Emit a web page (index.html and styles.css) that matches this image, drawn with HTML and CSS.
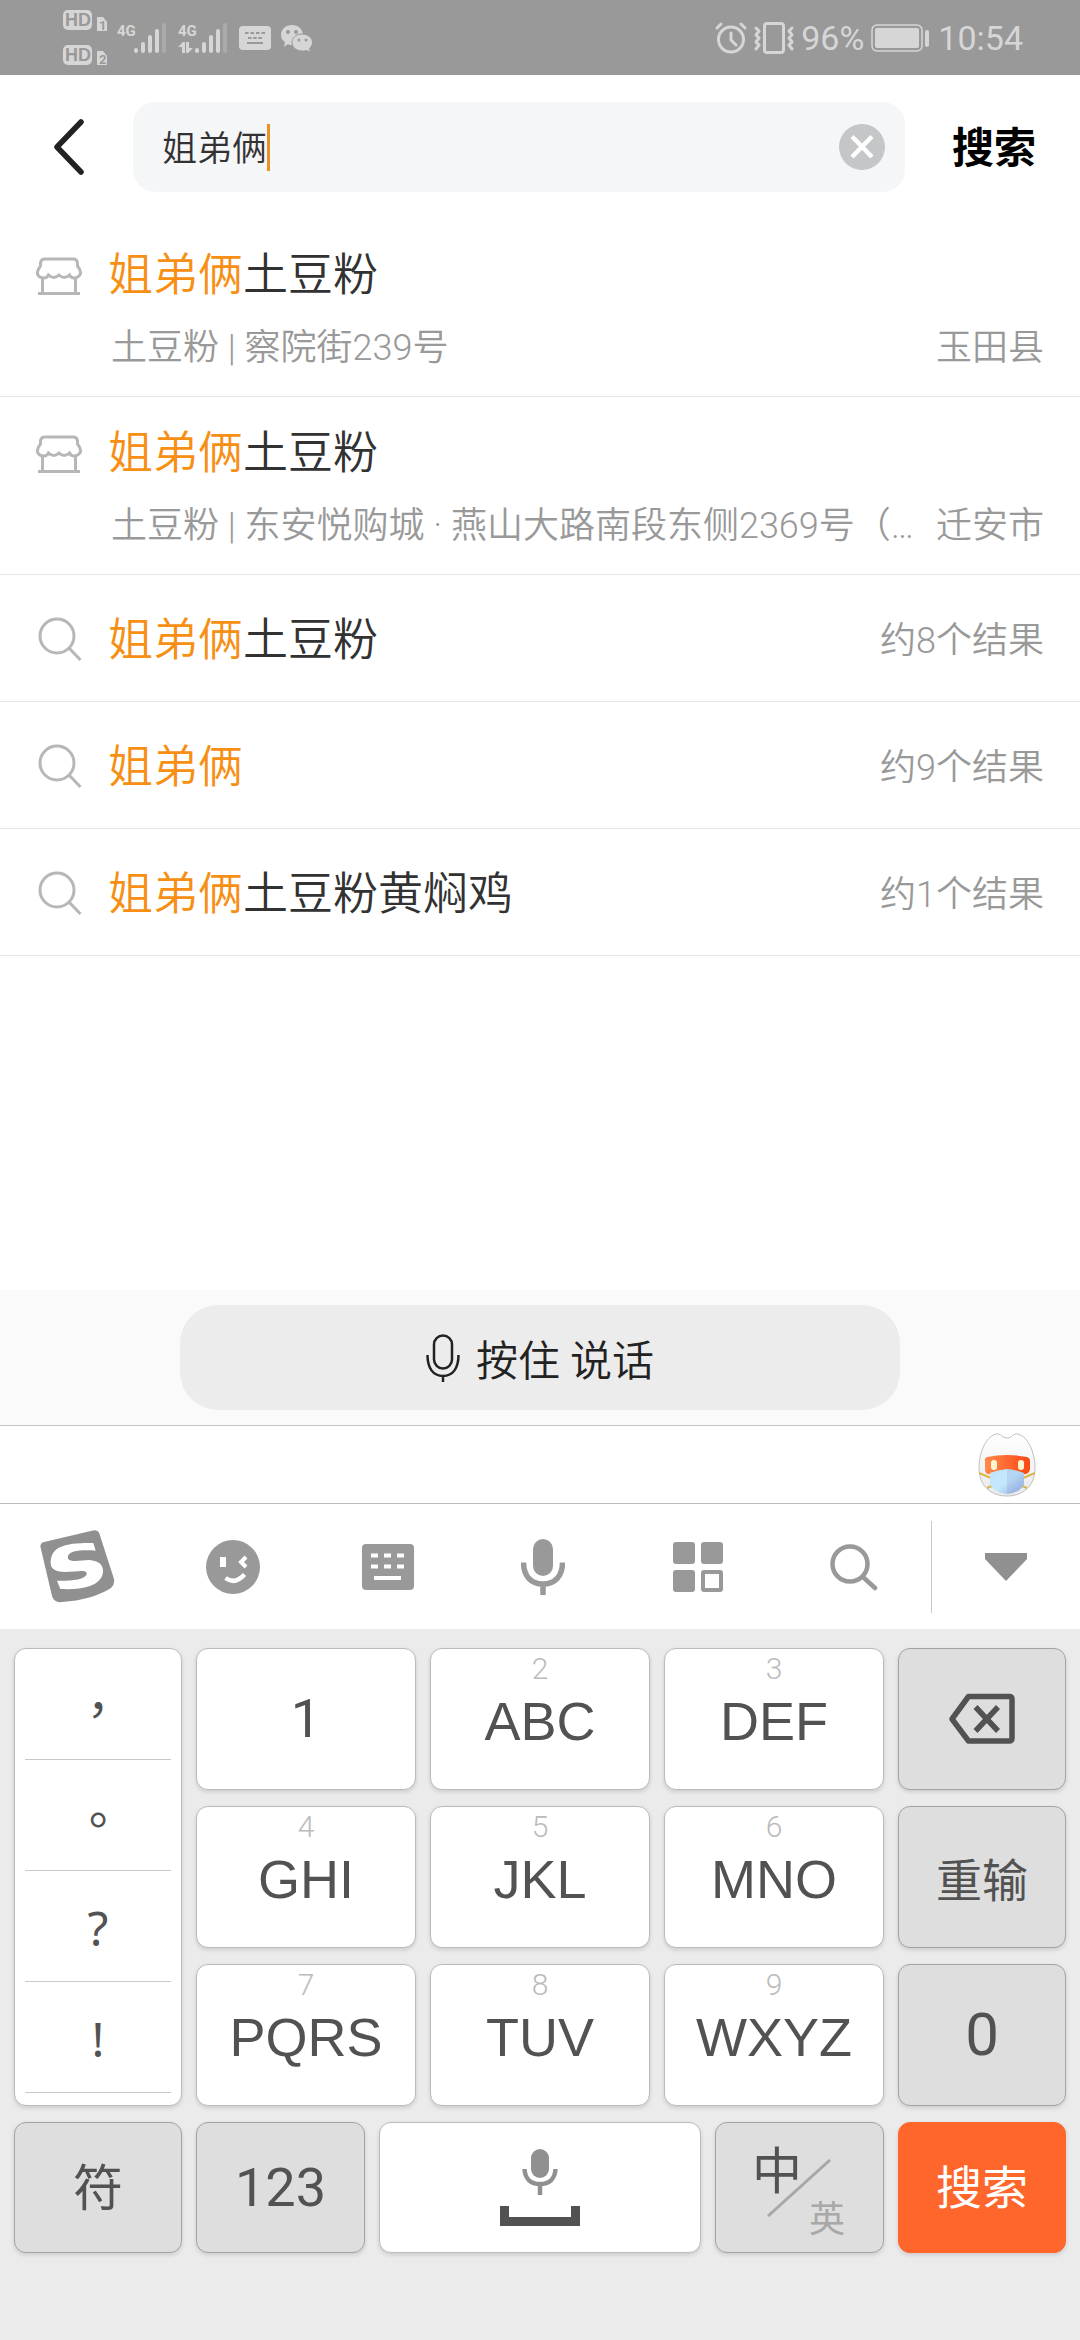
FILE: index.html
```html
<!DOCTYPE html>
<html lang="zh-CN">
<head>
<meta charset="utf-8">
<meta name="viewport" content="width=device-width">
<title>搜索</title>
<link rel="stylesheet" href="styles.css">
</head>
<body>
<svg width="0" height="0" class="defs" aria-hidden="true">
  <symbol id="store" viewBox="0 0 46 38">
    <path d="M9 2H37Q41 2 41.500 6V9Q45 13 44.500 17Q42 21 38 21Q35 21 33.500 18Q28 23 23 18Q18 23 12.500 18Q11 21 8 21Q3 21 1.500 17Q1 13 4.500 9V6Q5 2 9 2ZM6.500 21V36M39.500 21V36M2 36.500H44"/>
  </symbol>
  <symbol id="glass" viewBox="0 0 44 44">
    <circle cx="19" cy="19" r="17"/><path d="M31 31L42.500 43"/>
  </symbol>
</svg>

<header class="status">
  <div class="status-side">
    <svg width="44" height="56" viewBox="0 0 44 56">
      <g fill="#d6d6d6">
        <rect width="29" height="20" rx="5"/><rect y="35" width="29" height="20" rx="5"/>
        <path d="M34 7H40L44 12V21H34ZM34 41H40L44 46V55H34Z"/>
      </g>
      <g class="hd"><text x="2" y="16">HD</text><text x="2" y="51">HD</text></g>
      <g class="sim"><text x="36" y="20">1</text><text x="36" y="54">2</text></g>
    </svg>
    <svg width="51" height="32" viewBox="0 0 51 32">
      <text class="net" x="0" y="14">4G</text>
      <g stroke="#d6d6d6" stroke-width="4" stroke-linecap="round"><path d="M19 28V29M26 22V29M33 15V29M40 9V29"/><path d="M47 3V29" stroke="#ababab"/></g>
    </svg>
    <svg width="51" height="32" viewBox="0 0 51 32">
      <text class="net" x="0" y="14">4G</text>
      <path fill="#d6d6d6" d="M0 25L5 20H7V31H4V25ZM8 20H11V26H15L10 31H8Z"/>
      <g stroke="#d6d6d6" stroke-width="4" stroke-linecap="round"><path d="M19 28V29M26 22V29M33 15V29M40 9V29"/><path d="M47 3V29" stroke="#ababab"/></g>
    </svg>
    <svg width="32" height="32" viewBox="0 0 32 32">
      <rect y="4" width="32" height="24" rx="4" fill="#d6d6d6"/>
      <g stroke="#999" stroke-width="2"><path d="M6 11H26" stroke-dasharray="3.500 2"/><path d="M9 16H23" stroke-dasharray="3.500 1.700"/><path d="M8 21H24"/></g>
    </svg>
    <svg width="32" height="32" viewBox="0 0 32 32">
      <g fill="#d6d6d6"><path d="M11 3C17 3 22 7 22 13C22 19 17 23 11 23C9 23 8 23 7 22L3 25L4 20C1 18 0 16 0 13C0 7 5 3 11 3Z"/>
      <path stroke="#999" d="M21 12C27 12 31.500 16 31.500 20.500C31.500 23 30 25 28.500 26.500L29.500 30L25.500 28.500C24 29 23 29 21 29C15 29 11 25 11 20.500C11 16 15 12 21 12Z"/></g>
      <g fill="#999"><circle cx="7" cy="10" r="2"/><circle cx="15" cy="10" r="2"/><circle cx="18" cy="18" r="1.500"/><circle cx="25" cy="18" r="1.500"/></g>
    </svg>
  </div>
  <div class="status-side status-right">
    <svg width="32" height="32" viewBox="0 0 32 32" fill="none" stroke="#d6d6d6" stroke-width="3" stroke-linecap="round">
      <circle cx="16" cy="17.500" r="12.500"/><path d="M16 11V18L21 23M2 6L6 2M26 2L30 6" stroke-linejoin="round"/>
    </svg>
    <svg width="40" height="32" viewBox="0 0 40 32" fill="none" stroke="#d6d6d6" stroke-width="3" stroke-linecap="round" stroke-linejoin="round">
      <rect x="10.500" y="1.500" width="19" height="29" rx="2.500"/><path d="M2 6L5 9L2 13L5 16L2 20L5 23L2 27M38 6L35 9L38 13L35 16L38 20L35 23L38 27"/>
    </svg>
    <span>96%</span>
    <svg width="60" height="30" viewBox="0 0 60 30">
      <rect x="1" y="2" width="50" height="26" rx="5" fill="none" stroke="#d6d6d6" stroke-width="1.500"/><rect x="4" y="5" width="44" height="20" rx="2" fill="#d6d6d6"/><rect x="54" y="7" width="4" height="17" rx="2" fill="#d6d6d6"/>
    </svg>
    <time>10:54</time>
  </div>
</header>

<form class="search-bar">
  <button type="button" class="back" aria-label="返回">
    <svg width="32" height="56" viewBox="0 0 32 56"><path d="M28 3L4 28L28 53" fill="none" stroke="#222" stroke-width="5.500" stroke-linecap="round" stroke-linejoin="round"/></svg>
  </button>
  <div class="field">
    <input type="text" value="姐弟俩" aria-label="搜索内容">
    <span class="caret"></span>
    <button type="button" class="clear" aria-label="清除">
      <svg width="46" height="46" viewBox="0 0 46 46"><circle cx="23" cy="23" r="23" fill="#c5c6c8"/><path d="M13 12.500L33 33M33 12.500L13 33" stroke="#fff" stroke-width="4.500"/></svg>
    </button>
  </div>
  <button type="submit" class="submit">搜索</button>
</form>

<main>
  <ul class="results">
    <li><a href="#" class="shop"><svg class="icon"><use href="#store"/></svg>
      <span class="title"><mark>姐弟俩</mark>土豆粉</span>
      <span class="detail"><span class="address">土豆粉 | 察院街239号</span><span class="area">玉田县</span></span></a></li>
    <li><a href="#" class="shop"><svg class="icon"><use href="#store"/></svg>
      <span class="title"><mark>姐弟俩</mark>土豆粉</span>
      <span class="detail"><span class="address">土豆粉 | 东安悦购城 · 燕山大路南段东侧2369号（…</span><span class="area">迁安市</span></span></a></li>
    <li><a href="#" class="word"><svg class="icon"><use href="#glass"/></svg>
      <span class="title"><mark>姐弟俩</mark>土豆粉</span><span class="count">约8个结果</span></a></li>
    <li><a href="#" class="word"><svg class="icon"><use href="#glass"/></svg>
      <span class="title"><mark>姐弟俩</mark></span><span class="count">约9个结果</span></a></li>
    <li><a href="#" class="word"><svg class="icon"><use href="#glass"/></svg>
      <span class="title"><mark>姐弟俩</mark>土豆粉黄焖鸡</span><span class="count">约1个结果</span></a></li>
  </ul>
</main>

<div class="voice">
  <button type="button" class="talk">
    <svg width="34" height="48" viewBox="0 0 34 48" fill="none" stroke="#222" stroke-width="2.500"><rect x="8" y="1.500" width="18" height="33" rx="9"/><path d="M1.500 21C1.500 34 7 42 17 42S32.500 34 32.500 21M17 42V48"/></svg>
    <span>按住 说话</span>
  </button>
</div>

<div class="mascot">
  <svg width="64" height="70" viewBox="0 0 64 70">
    <defs>
      <linearGradient id="visor"><stop offset="0" stop-color="#ff8a4c"/><stop offset="1" stop-color="#fb4713"/></linearGradient>
      <linearGradient id="mask" x2="1" y2="1"><stop offset="0" stop-color="#bfe3fb"/><stop offset=".5" stop-color="#c4e8fb"/><stop offset="1" stop-color="#8fa9dd"/></linearGradient>
      <linearGradient id="shell" x2="0" y2="1"><stop offset="0" stop-color="#fff"/><stop offset="1" stop-color="#e9e9ec"/></linearGradient>
    </defs>
    <path d="M32 8C27 8 26 3 21 4C10 7 4 24 4 38C4 56 16 66 32 66S60 56 60 38C60 24 54 7 43 4C38 3 37 8 32 8Z" fill="url(#shell)" stroke="#bfbfc2"/>
    <path d="M12 27Q32 23 52 27Q55 28 55 31V39Q54 45 48 44Q32 38 16 44Q10 45 10 40V31Q9 28 12 27Z" fill="url(#visor)"/>
    <rect x="16" y="30" width="6" height="10" rx="3" fill="#fff6cf"/><rect x="43" y="30" width="6" height="10" rx="3" fill="#fff6cf"/>
    <path d="M4 43L16 48M60 43L48 48M12 58L17 56M52 58L47 56" stroke="#d9b74a" stroke-width="2"/>
    <path d="M15 43Q22 40 32 39Q42 40 49 43V54Q46 62 32 64Q18 62 15 54Z" fill="url(#mask)"/>
    <path d="M32 39Q42 40 49 43V54Q46 62 32 64Z" fill="#8098d8" opacity=".22"/>
  </svg>
</div>

<nav class="tools">
  <div class="tool-list">
    <button type="button" aria-label="搜狗输入法"><svg width="76" height="74" viewBox="0 0 76 74"><path fill="#909090" d="M4 12L53 .500Q58-.500 59.500 4L74 49Q75 54 71 58Q52 70 22 72Q14 73 12 66L.500 17Q0 13 4 12Z"/><path fill="#fff" d="M53.300 13L55.700 20.700C48 20 28 19 27.800 27.300C28 34 43 29.500 51 30.200C58 31 63 34 63 41C63 48 58 53 50 56C41 59 31 59.500 20.300 59L17 50.700C26 51 46 51 46.800 43.300C46 39 35 42 25.400 42C16 42 10.600 39 10.600 33C10.600 25 14 19 22 16.500C31 13 42 13 53.300 13Z"/></svg></button>
    <button type="button" aria-label="表情"><svg width="54" height="54" viewBox="0 0 54 54"><circle cx="27" cy="27" r="27" fill="#999"/><path d="M14 17H20V27H14Z" fill="#fff"/><g fill="none" stroke="#fff" stroke-width="4"><path d="M40 17L35 22L40 27"/><path d="M19.500 38Q29 45 38.500 34.500" stroke-width="4.500"/></g></svg></button>
    <button type="button" aria-label="键盘"><svg width="52" height="46" viewBox="0 0 52 46"><rect width="52" height="46" rx="4" fill="#999"/><path d="M9 11.500H42M9 22.500H42" stroke="#fff" stroke-width="4" stroke-dasharray="7 6"/><path d="M12 34H39" stroke="#fff" stroke-width="4"/></svg></button>
    <button type="button" aria-label="语音"><svg width="44" height="58" viewBox="0 0 44 58"><rect x="12" y="1" width="20" height="37" rx="10" fill="#999"/><path d="M2.500 24.500C2.500 38 10 46 22 46S41.500 38 41.500 24.500M22 46V57" fill="none" stroke="#999" stroke-width="5.500"/></svg></button>
    <button type="button" aria-label="工具"><svg width="50" height="50" viewBox="0 0 50 50" fill="#999"><rect width="22" height="22" rx="3"/><rect x="28" width="22" height="22" rx="3"/><rect y="28" width="22" height="22" rx="3"/><rect x="30" y="30" width="18" height="18" rx="1" fill="none" stroke="#999" stroke-width="4"/></svg></button>
    <button type="button" aria-label="搜索"><svg width="50" height="48" viewBox="0 0 50 48" fill="none" stroke="#999" stroke-width="4.500" stroke-linecap="round"><circle cx="21" cy="21" r="17.500"/><path d="M34 34L46 45"/></svg></button>
  </div>
  <button type="button" class="hide" aria-label="收起"><svg width="42" height="28" viewBox="0 0 42 28"><path d="M0 0H42V6L21 28L0 6Z" fill="#909090"/></svg></button>
</nav>

<section class="keyboard">
  <div class="keys">
    <div class="marks key">
      <button type="button" class="mark-cjk">，</button>
      <button type="button" class="mark-cjk">。</button>
      <button type="button">?</button>
      <button type="button">!</button>
    </div>
    <button type="button" class="key numeral">1</button>
    <button type="button" class="key"><small>2</small><span>ABC</span></button>
    <button type="button" class="key"><small>3</small><span>DEF</span></button>
    <button type="button" class="key dark" aria-label="删除"><svg width="68" height="52" viewBox="0 0 68 52" fill="none" stroke="#525252" stroke-width="5.500"><path d="M20.500 3.500H61Q64 3.500 64 6V45Q64 48 61 48H20.500L4 26Z" stroke-linejoin="round"/><path d="M27.500 14L50 38M50 14L27.500 38"/></svg></button>
    <button type="button" class="key"><small>4</small><span>GHI</span></button>
    <button type="button" class="key"><small>5</small><span>JKL</span></button>
    <button type="button" class="key"><small>6</small><span>MNO</span></button>
    <button type="button" class="key dark word-key">重输</button>
    <button type="button" class="key"><small>7</small><span>PQRS</span></button>
    <button type="button" class="key"><small>8</small><span>TUV</span></button>
    <button type="button" class="key"><small>9</small><span>WXYZ</span></button>
    <button type="button" class="key dark numeral zero">0</button>
  </div>
  <div class="bottom-keys">
    <button type="button" class="key dark word-key symbol">符</button>
    <button type="button" class="key dark numeral">123</button>
    <button type="button" class="key" aria-label="空格"><svg width="80" height="78" viewBox="0 0 80 78"><rect x="31" width="18" height="29" rx="9" fill="#909090"/><path d="M24.500 20C25 30 31 35 40 35S55 30 55.500 20M40 35V46" fill="none" stroke="#909090" stroke-width="4.500"/><path d="M0 57H9V68H71V57H80V77H0Z" fill="#525252"/></svg></button>
    <button type="button" class="key dark language"><span class="zh">中</span><svg width="64" height="58" viewBox="0 0 64 58"><path d="M1 57L63 1" stroke="#a8a8a8" stroke-width="3"/></svg><span class="en">英</span></button>
    <button type="button" class="key go word-key">搜索</button>
  </div>
</section>
</body>
</html>
```
FILE: styles.css
```css
* { box-sizing: border-box; }

body {
  margin: 0;
  min-height: 100vh;
  display: flex;
  flex-direction: column;
  background: #fff;
  color: #323232;
  font-family: Roboto, "Noto Sans CJK SC", sans-serif;
  font-weight: 350;
}

button {
  margin: 0;
  padding: 0;
  border: 0;
  background: none;
  color: inherit;
  font: inherit;
}

svg { display: block; flex: none; }
.defs { position: absolute; }

/* status bar */
.status {
  height: 75px;
  padding: 0 57px 0 63px;
  display: flex;
  justify-content: space-between;
  align-items: center;
  background: #999;
  color: #d6d6d6;
  font-size: 34px;
  font-weight: 400;
}
.status-side { display: flex; align-items: center; gap: 10px; }
.status-right { gap: 7px; }
.hd { font: 700 18px "Liberation Sans", sans-serif; fill: #999; }
.sim { font: 700 13px Roboto, sans-serif; fill: #999; }
.net { font: 700 15px Roboto, sans-serif; fill: #d6d6d6; }

/* search bar */
.search-bar {
  height: 144px;
  padding: 27px 44px 0 53px;
  display: flex;
  align-items: flex-start;
}
.back { height: 90px; width: 80px; }
.field {
  flex: 1;
  height: 90px;
  padding: 0 20px 0 29px;
  display: flex;
  align-items: center;
  border-radius: 22px;
  background: #f5f6f8;
}
.field input {
  width: 3em;
  height: 48px;
  padding: 0 0 4px;
  border: 0;
  outline: 0;
  background: none;
  color: #323232;
  font: inherit;
  font-size: 35px;
}
.caret { width: 3px; height: 47px; background: #ea9123; }
.clear { margin-left: auto; }
.submit {
  height: 90px;
  margin-left: 47px;
  padding-bottom: 5px;
  color: #000;
  font-size: 42px;
  font-weight: 700;
}

/* suggestions */
main { flex: 1; }
.results { margin: 0; padding: 0; list-style: none; }
.results li { border-bottom: 1px solid #e5e5e5; }
.results a {
  display: grid;
  grid-template-columns: 72px 1fr auto;
  align-items: center;
  padding: 0 36px;
  color: inherit;
  text-decoration: none;
}
.icon { fill: none; stroke: #b7b7b7; stroke-width: 3px; }
.results .shop {
  height: 177px;
  padding-top: 8px;
  grid-template-rows: 50px 50px;
  align-content: center;
  row-gap: 22px;
}
.shop .icon { width: 46px; height: 38px; }
.results .word { height: 126px; padding-top: 2px; }
.word .icon { width: 44px; height: 44px; margin-left: 2px; }
.word span { padding-top: 4px; }
.title { font-size: 45px; line-height: 50px; }
.title mark { background: none; color: #f68f13; }
.detail {
  grid-column: 1 / -1;
  padding-left: 75px;
  display: flex;
  justify-content: space-between;
}
.detail, .count { color: #999; font-size: 36px; line-height: 50px; }
.address {
  min-width: 0;
  overflow: hidden;
  text-overflow: ellipsis;
  white-space: nowrap;
}
.area { flex: none; }

/* hold to talk */
.voice { padding: 15px 180px; border-bottom: 1px solid #c6c6c6; background: #fafafa; }
.talk {
  width: 100%;
  height: 105px;
  display: flex;
  justify-content: center;
  align-items: center;
  gap: 16px;
  border-radius: 38px;
  background: #ececec;
  color: #222;
  font-size: 42px;
}

/* keyboard header */
.mascot {
  height: 78px;
  padding-right: 41px;
  display: flex;
  justify-content: flex-end;
  align-items: center;
  border-bottom: 1px solid #bbb;
}
.tools { height: 125px; display: flex; align-items: center; }
.tool-list { flex: 932; display: grid; grid-template-columns: repeat(6, 1fr); }
.tools button { display: flex; justify-content: center; align-items: center; }
.tools .hide { flex: 148; height: 92px; border-left: 1px solid #c8c8c8; }

/* keys */
.keyboard {
  padding: 19px 14px 87px;
  display: grid;
  gap: 16px;
  background: #ebebeb;
  color: #525252;
}
.keys {
  display: grid;
  grid-template-columns: 168fr 220fr 220fr 220fr 168fr;
  grid-auto-rows: 142px;
  gap: 16px 14px;
}
.bottom-keys {
  display: grid;
  grid-template-columns: 168fr 169fr 322fr 169fr 168fr;
  grid-auto-rows: 131px;
  gap: 14px;
}
.key {
  display: flex;
  flex-direction: column;
  justify-content: center;
  align-items: center;
  border: 1px solid #bbb;
  border-radius: 12px;
  background: #fff;
  box-shadow: 0 2px 4px #0002;
  font: 400 54px/60px "Liberation Sans", sans-serif;
}
.key small {
  margin-bottom: 7px;
  color: #bbb;
  font: 300 30px/30px Roboto, sans-serif;
}
.key small + span { margin-bottom: 33px; }
.dark { background: #dedede; border-color: #a3a3a3; }
.numeral { font-family: Roboto, sans-serif; }
.zero { font-size: 60px; }
.word-key { font-family: "Noto Sans CJK SC", sans-serif; font-size: 46px; }
.bottom-keys .word-key { padding-bottom: 8px; }
.symbol { font-size: 50px; }
.go { border-color: #ff662c; background: #ff662c; color: #fff; }

.marks {
  grid-row: span 3;
  justify-content: flex-start;
  align-items: stretch;
  padding: 0 10px;
}
.marks button {
  height: 111px;
  padding-top: 4px;
  border-bottom: 1px solid #c8c8c8;
  font: 400 48px/60px "Noto Sans", sans-serif;
}
.marks .mark-cjk { font-family: "Noto Sans CJK TC", sans-serif; }

.language {
  display: grid;
  grid-template-columns: 1fr 1fr;
  grid-template-rows: 1fr 1fr;
  padding: 14px 38px 14px 36px;
  font-family: "Noto Sans CJK SC", sans-serif;
}
.language > * { grid-area: 1 / 1 / 3 / 3; }
.language .zh { place-self: start; font-size: 50px; line-height: 60px; }
.language svg { place-self: center; }
.language .en { place-self: end; color: #a8a8a8; font-size: 36px; line-height: 44px; }
```
